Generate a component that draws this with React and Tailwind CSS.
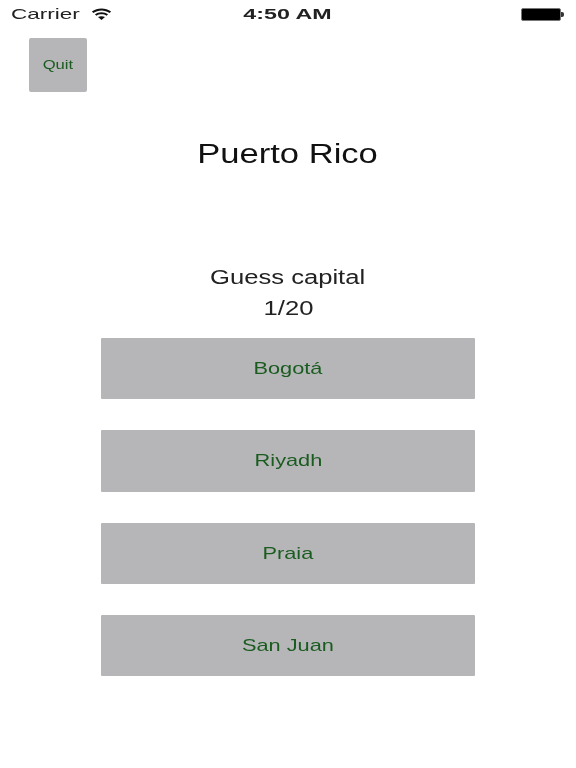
const answers = [
  { name: "Bogotá", cls: "h-[61px] mb-[31px]" },
  { name: "Riyadh", cls: "h-[62px] mb-[31px]" },
  { name: "Praia", cls: "h-[61px] mb-[31px]" },
  { name: "San Juan", cls: "h-[61px]" },
];

const font = { fontFamily: "'Liberation Sans', Arial, sans-serif" };

// the shot is stretched sideways, so text gets widened too
const Wide = ({ className = "scale-x-[1.28]", children }) => (
  <span className={`inline-block ${className}`}>{children}</span>
);

const App = () => {
  return (
    <div className="w-[576px] h-[768px] bg-white text-[#111] overflow-hidden blur-[0.5px]" style={font}>
      {/* status bar */}
      <div className="h-[28px] pl-[11px] pr-[12px] flex items-center justify-between text-[15px]">
        <div className="flex items-center gap-[11px] w-[130px] text-[#222]">
          <Wide className="scale-x-[1.5] origin-left w-[69px]">Carrier</Wide>
          <svg width="21" height="12" viewBox="0 0 23 14" fill="#111" preserveAspectRatio="none">
            <path d="M1 4.2C7 -0.6 16 -0.6 22 4.2L20.4 5.9C15.3 1.9 7.7 1.9 2.6 5.9Z" />
            <path d="M4.3 7.4C8.3 4.2 14.7 4.2 18.7 7.4L17 9.1C14 6.8 9 6.8 6 9.1Z" />
            <path d="M7.7 10.6C9.8 9.2 13.2 9.2 15.3 10.6L11.5 14Z" />
          </svg>
        </div>
        <Wide className="scale-x-[1.55] font-bold text-[#222]">4:50 AM</Wide>
        <div className="w-[130px] flex justify-end items-center">
          <div className="w-[40px] h-[13px] bg-black rounded-[2px] border border-[#777]" />
          <div className="w-[3px] h-[5px] bg-[#333] rounded-r-[2px]" />
        </div>
      </div>

      {/* quit */}
      <div className="pl-[29px] pt-[10px]">
        <button className="w-[58px] h-[54px] bg-[#b6b6b8] rounded-[2px] text-[#1a5c20] text-[13px] flex items-center justify-center">
          <Wide>Quit</Wide>
        </button>
      </div>

      <h1 className="mt-[44px] text-center text-[27px] leading-[36px] text-[#111]">
        <Wide>Puerto Rico</Wide>
      </h1>

      <div className="mt-[90px] text-center text-[20px] leading-[31px] text-[#222]">
        <p><Wide>Guess capital</Wide></p>
        <p><Wide>1/20</Wide></p>
      </div>

      <div className="mt-[14px] mx-[101px] flex flex-col">
        {answers.map((a) => (
          <button
            key={a.name}
            className={`${a.cls} bg-[#b6b6b8] rounded-[1px] text-[#1a5c20] text-[17px] flex items-center justify-center`}
          >
            <Wide>{a.name}</Wide>
          </button>
        ))}
      </div>
    </div>
  );
};

export default App;
